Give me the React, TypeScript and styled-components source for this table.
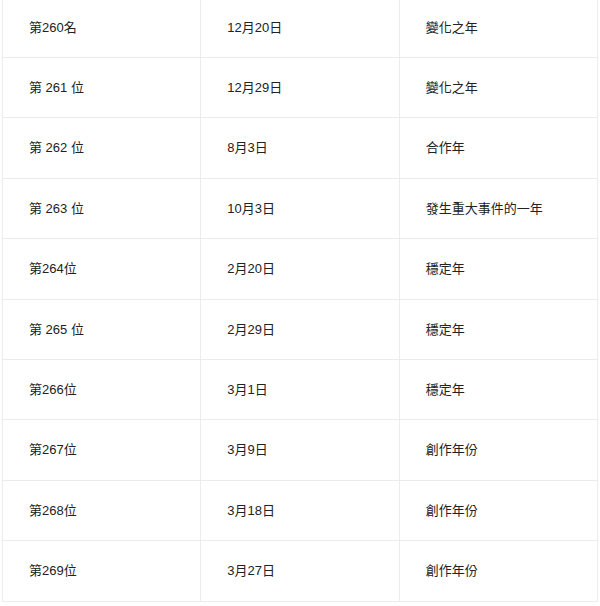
import React from "react";
import styled, { createGlobalStyle } from "styled-components";

const GlobalStyle = createGlobalStyle`
  html, body {
    margin: 0;
    padding: 0;
    background: #ffffff;
    overflow: hidden;
  }
`;

const Wrapper = styled.div`
  padding: 0 2px;
  margin-top: -3.4px;
  font-family: "Liberation Sans", "Noto Sans CJK TC", sans-serif;
`;

const Table = styled.table`
  width: 100%;
  table-layout: fixed;
  border-collapse: collapse;
  border: 1px solid #ececec;
`;

const Cell = styled.td`
  padding: 20px 26px;
  border: 1px solid #ececec;
  font-size: 13px;
  line-height: 19.4px;
  color: #222222;
  white-space: nowrap;
`;

interface Row {
  rank: string;
  date: string;
  label: string;
}

const rows: Array<Row> = [
  { rank: "第260名", date: "12月20日", label: "變化之年" },
  { rank: "第 261 位", date: "12月29日", label: "變化之年" },
  { rank: "第 262 位", date: "8月3日", label: "合作年" },
  { rank: "第 263 位", date: "10月3日", label: "發生重大事件的一年" },
  { rank: "第264位", date: "2月20日", label: "穩定年" },
  { rank: "第 265 位", date: "2月29日", label: "穩定年" },
  { rank: "第266位", date: "3月1日", label: "穩定年" },
  { rank: "第267位", date: "3月9日", label: "創作年份" },
  { rank: "第268位", date: "3月18日", label: "創作年份" },
  { rank: "第269位", date: "3月27日", label: "創作年份" },
];

const App: React.FunctionComponent = () => {
  return (
    <>
      <GlobalStyle />
      <Wrapper>
        <Table>
          <tbody>
            {rows.map((row, idx) => (
              <tr key={idx}>
                <Cell>{row.rank}</Cell>
                <Cell>{row.date}</Cell>
                <Cell>{row.label}</Cell>
              </tr>
            ))}
          </tbody>
        </Table>
      </Wrapper>
    </>
  );
};

export default App;
